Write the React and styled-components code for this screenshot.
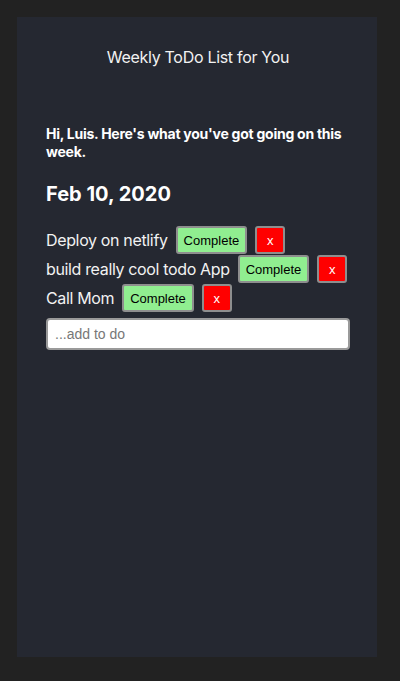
import React, { useState } from "react";
import styled, { createGlobalStyle } from "styled-components";

const GlobalStyle = createGlobalStyle`
  html, body {
    margin: 0;
    padding: 0;
    background: #222222;
  }
  body {
    font-family: Inter, "Noto Sans", sans-serif;
  }
`;

const Page = styled.div`
  padding: 17px 23px 24px 17px;
  min-height: 681px;
  box-sizing: border-box;
`;

const Card = styled.main`
  background: #252831;
  height: 640px;
  padding: 30px 27px 0 29px;
  box-sizing: border-box;
  color: #fff;
`;

const Title = styled.h1`
  margin: 0;
  text-align: center;
  font-size: 16px;
  font-weight: 400;
  line-height: 20px;
  letter-spacing: -0.3px;
  color: #f2f2f2;
`;

const Greeting = styled.h3`
  margin: 58px 0 0;
  font-size: 14px;
  font-weight: 700;
  line-height: 18px;
  letter-spacing: -0.25px;
`;

const DateLabel = styled.h2`
  margin: 20px 0 0;
  font-size: 20px;
  font-weight: 700;
  line-height: 26px;
`;

const List = styled.ul`
  list-style: none;
  margin: 19px 0 0;
  padding: 0;
  display: flex;
  flex-direction: column;
  gap: 1px;
`;

const Item = styled.li`
  display: flex;
  align-items: center;
  height: 28px;
  font-size: 16px;
  letter-spacing: -0.35px;
  white-space: nowrap;
  color: #f2f2f2;
`;

const Button = styled.button`
  height: 28px;
  margin-left: 8px;
  padding: 0 6px;
  border: 2px solid #8e8e8e;
  border-radius: 3px;
  font-family: "Liberation Sans", Arial, sans-serif;
  font-size: 13px;
  letter-spacing: 0;
  background: ${(p) => (p.$danger ? "#ff0000" : "#90ee90")};
  color: ${(p) => (p.$danger ? "#fff" : "#000")};
  width: ${(p) => (p.$danger ? "30px" : "auto")};
  cursor: pointer;
`;

const AddInput = styled.input`
  display: block;
  margin-top: 6px;
  width: 304px;
  height: 32px;
  box-sizing: border-box;
  padding: 0 7px;
  border: 2px solid #9a9a9a;
  border-radius: 4px;
  font-family: "Liberation Sans", Arial, sans-serif;
  font-size: 14px;
  background: #fff;
  &::placeholder {
    color: #777;
  }
`;

const initial = ["Deploy on netlify", "build really cool todo App", "Call Mom"];

export default function App() {
  const [todos] = useState(initial);
  return (
    <>
      <GlobalStyle />
      <Page>
        <Card>
          <Title>Weekly ToDo List for You</Title>
          <Greeting>Hi, Luis. Here's what you've got going on this week.</Greeting>
          <DateLabel>Feb 10, 2020</DateLabel>
          <List>
            {todos.map((t) => (
              <Item key={t}>
                {t}
                <Button>Complete</Button>
                <Button $danger>x</Button>
              </Item>
            ))}
          </List>
          <AddInput placeholder="...add to do" />
        </Card>
      </Page>
    </>
  );
}
